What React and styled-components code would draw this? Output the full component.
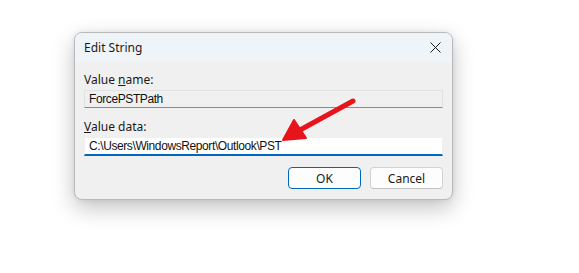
import React from "react";
import styled, { createGlobalStyle } from "styled-components";

const Global = createGlobalStyle`
  html, body { margin: 0; padding: 0; background: #ffffff; }
  body { font-family: "Noto Sans", "Open Sans", "Liberation Sans", sans-serif; }
`;

const Page = styled.div`
  position: relative;
  width: 579px;
  height: 273px;
  background: #ffffff;
  padding: 32px 0 0 74px;
  box-sizing: border-box;
`;

const Dialog = styled.div`
  width: 379px;
  height: 168px;
  box-sizing: border-box;
  border: 1px solid #b9b9b9;
  border-radius: 8px;
  overflow: hidden;
  background: #f0f0f0;
  box-shadow: 0 8px 22px rgba(0, 0, 0, 0.24), 0 0 5px rgba(0, 0, 0, 0.08);
  display: flex;
  flex-direction: column;
`;

const TitleBar = styled.div`
  height: 29px;
  background: #eff4f9;
  display: flex;
  align-items: center;
  justify-content: space-between;
  padding: 0 10px 0 9px;
  font-size: 12px;
  color: #1a1a1a;
`;

const CloseIcon = styled.svg`
  width: 11px;
  height: 11px;
  margin-right: 1px;
`;

const Body = styled.div`
  padding: 10px 9px 0 9px;
  display: flex;
  flex-direction: column;
`;

const Label = styled.div`
  font-size: 12px;
  line-height: 16px;
  color: #1a1a1a;
  margin-top: ${(p) => p.$mt || 0}px;
  margin-bottom: 2px;
  u { text-decoration: underline; text-underline-offset: 1px; }
`;

const Field = styled.div`
  box-sizing: border-box;
  display: flex;
  align-items: center;
  padding: 0 4px;
  font-family: "Liberation Sans", Arial, sans-serif;
  font-size: 12px;
  letter-spacing: -0.4px;
  color: #111;
  background: ${(p) => (p.$active ? "#ffffff" : "#f0f0f0")};
  border: 1px solid ${(p) => (p.$active ? "#f0f0f0" : "#e2e2e2")};
  border-bottom: ${(p) => (p.$active ? "2px solid #0067c0" : "1px solid #8a8a8a")};
  height: ${(p) => (p.$active ? 19 : 18)}px;
`;

const Buttons = styled.div`
  display: flex;
  justify-content: flex-end;
  gap: 9px;
  margin-top: 11px;
`;

const Button = styled.button`
  width: 73px;
  height: 22px;
  box-sizing: border-box;
  border-radius: 4px;
  background: #fdfdfd;
  border: 1px solid ${(p) => (p.$primary ? "#0067c0" : "#d2d2d2")};
  border-bottom-color: ${(p) => (p.$primary ? "#0067c0" : "#c0c0c0")};
  font-family: "Noto Sans", "Open Sans", sans-serif;
  font-size: 12px;
  color: #1a1a1a;
  padding: 0;
`;

const Arrow = styled.svg`
  position: absolute;
  left: 270px;
  top: 92px;
  width: 100px;
  height: 60px;
  overflow: visible;
`;

export default function App() {
  return (
    <>
      <Global />
      <Page>
        <Dialog>
          <TitleBar>
            <span>Edit String</span>
            <CloseIcon viewBox="0 0 11 11">
              <path d="M0.5 0.5 L10.5 10.5 M10.5 0.5 L0.5 10.5" stroke="#1a1a1a" strokeWidth="1" fill="none" />
            </CloseIcon>
          </TitleBar>
          <Body>
            <Label>Value <u>n</u>ame:</Label>
            <Field>ForcePSTPath</Field>
            <Label $mt={11}><u>V</u>alue data:</Label>
            <Field $active>C:\Users\WindowsReport\Outlook\PST</Field>
            <Buttons>
              <Button $primary>OK</Button>
              <Button>Cancel</Button>
            </Buttons>
          </Body>
        </Dialog>
        <Arrow viewBox="0 0 100 60">
          <path d="M83 9 L30 38" stroke="#e8141b" strokeWidth="5" strokeLinecap="round" fill="none" />
          <path d="M13 48 L24 28 L36 46 Z" fill="#e8141b" stroke="#e8141b" strokeWidth="2" strokeLinejoin="round" />
        </Arrow>
      </Page>
    </>
  );
}
